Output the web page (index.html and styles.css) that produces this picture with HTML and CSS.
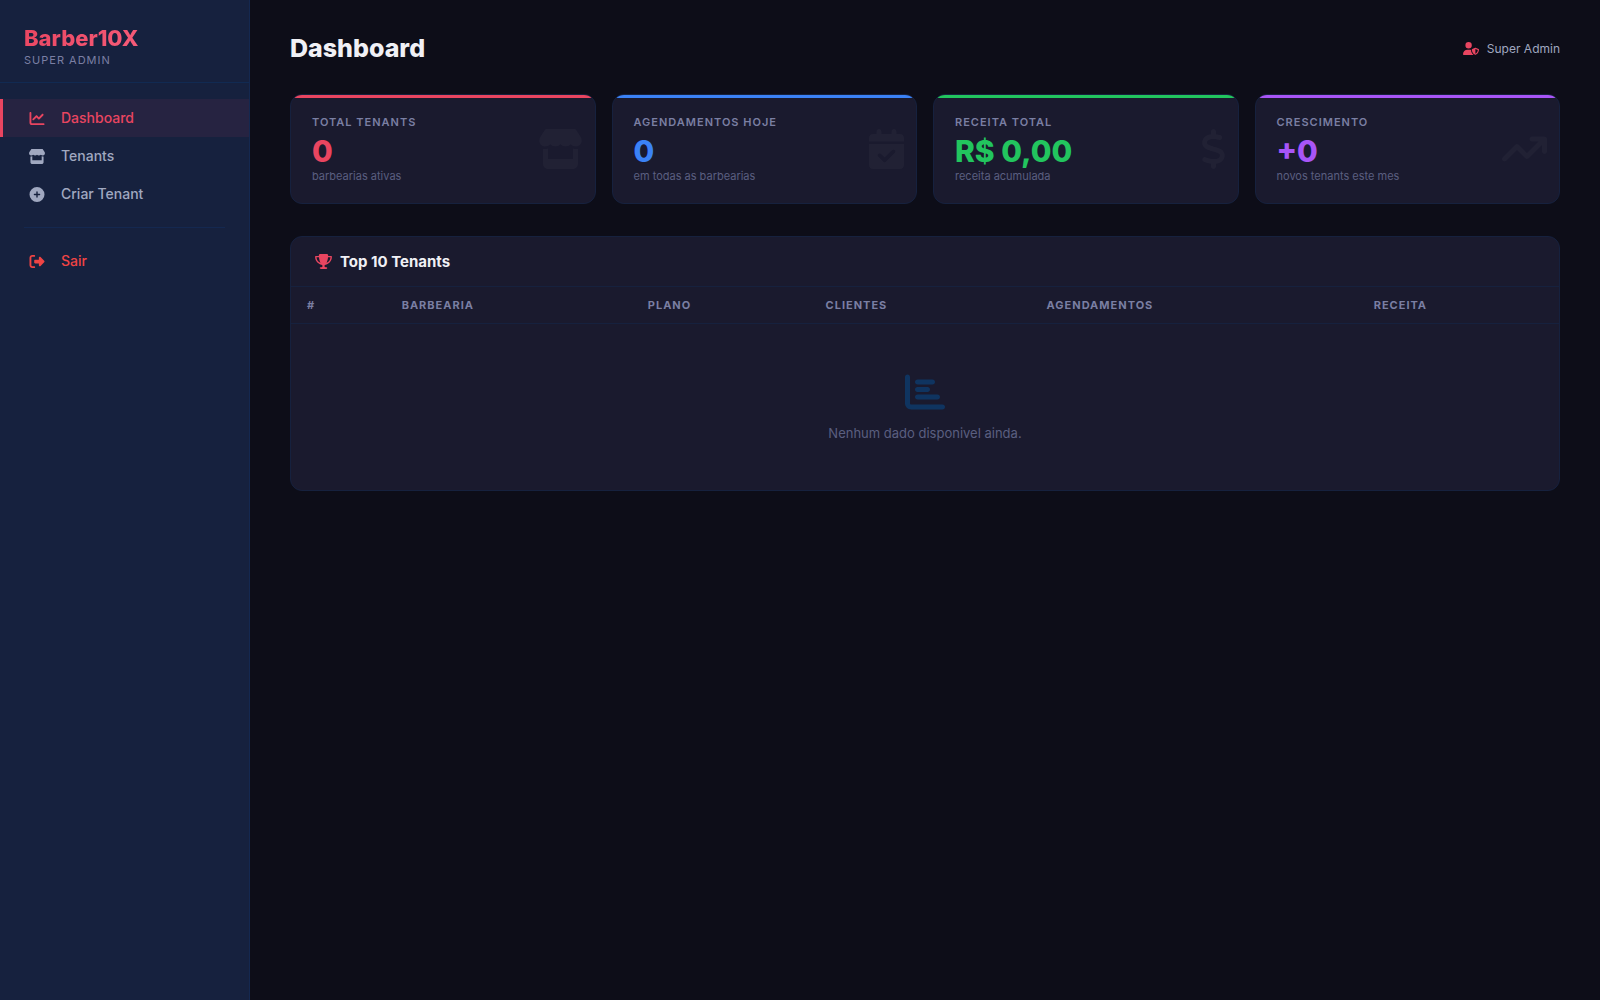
FILE: index.html
```html
<!DOCTYPE html>
<html lang="pt-BR">
<head>
  <meta charset="UTF-8">
  <meta name="viewport" content="width=device-width, initial-scale=1.0">
  <title>Dashboard - Barber10X</title>
  <link rel="stylesheet" href="styles.css">
</head>
<body>
  <aside class="sidebar">
    <div class="sidebar-header">
      <div class="logo">Barber10X</div>
      <div class="logo-sub">Super Admin</div>
    </div>
    <nav class="sidebar-nav">
      <a href="#" class="nav-link active">
        <svg viewBox="0 0 512 512" aria-hidden="true"><path d="M64 64c0-17.7-14.3-32-32-32S0 46.3 0 64V400c0 44.2 35.8 80 80 80H480c17.7 0 32-14.3 32-32s-14.3-32-32-32H80c-8.8 0-16-7.2-16-16V64zm406.6 86.6c12.5-12.5 12.5-32.8 0-45.3s-32.8-12.5-45.3 0L320 210.7l-57.4-57.4c-12.5-12.5-32.8-12.5-45.3 0l-112 112c-12.5 12.5-12.5 32.8 0 45.3s32.8 12.5 45.3 0L240 221.3l57.4 57.4c12.5 12.5 32.8 12.5 45.3 0l128-128z"/></svg>
        Dashboard
      </a>
      <a href="#" class="nav-link">
        <svg viewBox="0 0 576 512" aria-hidden="true"><path d="M547.6 103.8L490.3 13.1C485.2 5 476.1 0 466.4 0H109.6C99.9 0 90.8 5 85.7 13.1L28.3 103.8c-29.6 46.8-3.4 111.9 51.9 119.4c4 .5 8.1 .8 12.1 .8c26.1 0 49.3-11.4 65.2-29c15.9 17.6 39.1 29 65.2 29c26.1 0 49.3-11.4 65.2-29c15.9 17.6 39.1 29 65.2 29c26.2 0 49.3-11.4 65.2-29c16 17.6 39.1 29 65.2 29c4.1 0 8.1-.3 12.1-.8c55.5-7.4 81.8-72.5 52.1-119.4zM499.7 254.9l-.1 0c-5.3 .7-10.7 1.1-16.2 1.1c-12.4 0-24.3-1.9-35.4-5.3V384H128V250.6c-11.2 3.5-23.2 5.4-35.6 5.4c-5.5 0-11-.4-16.3-1.1l-.1 0c-4.1-.6-8.1-1.3-12-2.3V384v64c0 35.3 28.7 64 64 64H448c35.3 0 64-28.7 64-64V384 252.6c-4 1-8 1.8-12.3 2.3z"/></svg>
        Tenants
      </a>
      <a href="#" class="nav-link">
        <svg viewBox="0 0 512 512" aria-hidden="true"><path d="M256 512A256 256 0 1 0 256 0a256 256 0 1 0 0 512zM232 344V280H168c-13.3 0-24-10.7-24-24s10.7-24 24-24h64V168c0-13.3 10.7-24 24-24s24 10.7 24 24v64h64c13.3 0 24 10.7 24 24s-10.7 24-24 24H280v64c0 13.3-10.7 24-24 24s-24-10.7-24-24z"/></svg>
        Criar Tenant
      </a>
      <div class="nav-divider"></div>
      <a href="#" class="nav-link logout">
        <svg viewBox="0 0 512 512" aria-hidden="true"><path d="M377.9 105.9L500.7 228.7c7.2 7.2 11.3 17.1 11.3 27.3s-4.1 20.1-11.3 27.3L377.9 406.1c-6.4 6.4-15 9.9-24 9.9c-18.7 0-33.9-15.2-33.9-33.9l0-62.1-128 0c-17.7 0-32-14.3-32-32l0-64c0-17.7 14.3-32 32-32l128 0 0-62.1c0-18.7 15.2-33.9 33.9-33.9c9 0 17.6 3.6 24 9.9zM160 96L96 96c-17.7 0-32 14.3-32 32l0 256c0 17.7 14.3 32 32 32l64 0c17.7 0 32 14.3 32 32s-14.3 32-32 32l-64 0c-53 0-96-43-96-96L0 128C0 75 43 32 96 32l64 0c17.7 0 32 14.3 32 32s-14.3 32-32 32z"/></svg>
        Sair
      </a>
    </nav>
  </aside>

  <main class="main">
    <header class="page-header">
      <h1>Dashboard</h1>
      <div class="user">
        <svg viewBox="0 0 640 512" aria-hidden="true"><path d="M224 256A128 128 0 1 0 224 0a128 128 0 1 0 0 256zm-45.7 48C79.8 304 0 383.8 0 482.3C0 498.7 13.3 512 29.7 512H418.3c1.8 0 3.5-.2 5.3-.5c-76.3-55.1-99.8-141-103.1-200.2c-16.1-4.8-33.1-7.3-50.7-7.3H178.3zm308.8-78.3l-120 48C358 277.4 352 286.2 352 296c0 63.3 25.9 168.8 134.8 214.2c5.9 2.5 12.6 2.5 18.5 0C614.1 464.8 640 359.3 640 296c0-9.8-6-18.6-15.1-22.3l-120-48c-5.7-2.3-12.1-2.3-17.8 0zM591.4 312c-3.9 50.7-27.2 116.7-95.4 149.7V273.8L591.4 312z"/></svg>
        <span>Super Admin</span>
      </div>
    </header>

    <section class="stats">
      <div class="stat-card red">
        <div class="stat-label">Total Tenants</div>
        <div class="stat-value">0</div>
        <div class="stat-sub">barbearias ativas</div>
        <svg class="stat-icon" viewBox="0 0 576 512" aria-hidden="true"><path d="M547.6 103.8L490.3 13.1C485.2 5 476.1 0 466.4 0H109.6C99.9 0 90.8 5 85.7 13.1L28.3 103.8c-29.6 46.8-3.4 111.9 51.9 119.4c4 .5 8.1 .8 12.1 .8c26.1 0 49.3-11.4 65.2-29c15.9 17.6 39.1 29 65.2 29c26.1 0 49.3-11.4 65.2-29c15.9 17.6 39.1 29 65.2 29c26.2 0 49.3-11.4 65.2-29c16 17.6 39.1 29 65.2 29c4.1 0 8.1-.3 12.1-.8c55.5-7.4 81.8-72.5 52.1-119.4zM499.7 254.9l-.1 0c-5.3 .7-10.7 1.1-16.2 1.1c-12.4 0-24.3-1.9-35.4-5.3V384H128V250.6c-11.2 3.5-23.2 5.4-35.6 5.4c-5.5 0-11-.4-16.3-1.1l-.1 0c-4.1-.6-8.1-1.3-12-2.3V384v64c0 35.3 28.7 64 64 64H448c35.3 0 64-28.7 64-64V384 252.6c-4 1-8 1.8-12.3 2.3z"/></svg>
      </div>
      <div class="stat-card blue">
        <div class="stat-label">Agendamentos Hoje</div>
        <div class="stat-value">0</div>
        <div class="stat-sub">em todas as barbearias</div>
        <svg class="stat-icon" viewBox="0 0 448 512" aria-hidden="true"><path d="M128 0c17.7 0 32 14.3 32 32V64H288V32c0-17.7 14.3-32 32-32s32 14.3 32 32V64h48c26.5 0 48 21.5 48 48v48H0V112C0 85.5 21.5 64 48 64H96V32c0-17.7 14.3-32 32-32zM0 192H448V464c0 26.5-21.5 48-48 48H48c-26.5 0-48-21.5-48-48V192zM329 305c9.4-9.4 9.4-24.6 0-33.9s-24.6-9.4-33.9 0l-95 95-47-47c-9.4-9.4-24.6-9.4-33.9 0s-9.4 24.6 0 33.9l64 64c9.4 9.4 24.6 9.4 33.9 0L329 305z"/></svg>
      </div>
      <div class="stat-card green">
        <div class="stat-label">Receita Total</div>
        <div class="stat-value">R$ 0,00</div>
        <div class="stat-sub">receita acumulada</div>
        <svg class="stat-icon" viewBox="0 0 320 512" aria-hidden="true"><path d="M160 0c17.7 0 32 14.3 32 32V67.7c1.6 .2 3.1 .4 4.7 .7c.4 .1 .7 .1 1.1 .2l48 8.8c17.4 3.2 28.9 19.9 25.7 37.2s-19.9 28.9-37.2 25.7l-47.5-8.7c-31.3-4.6-58.9-1.5-78.3 6.2s-27.2 18.3-29 28.1c-2 10.7-.5 16.7 1.2 20.4c1.8 3.9 5.5 8.3 12.8 13.2c16.3 10.7 41.3 17.7 73.7 26.3l2.9 .8c28.6 7.6 63.6 16.8 89.6 33.8c14.2 9.3 27.6 21.9 35.9 39.5c8.5 17.9 10.3 37.9 6.4 59.2c-6.9 38-33.1 63.4-65.6 76.7c-13.7 5.6-28.6 9.2-44.4 11V480c0 17.7-14.3 32-32 32s-32-14.3-32-32V445.1c-.4-.1-.9-.1-1.3-.2l-.2 0 0 0c-24.4-3.8-64.5-14.3-91.5-26.3c-16.1-7.2-23.4-26.1-16.2-42.2s26.1-23.4 42.2-16.2c20.9 9.3 55.3 18.5 75.2 21.6c31.9 4.7 58.2 2 76-5.3c16.9-6.9 24.6-16.9 26.8-28.9c1.9-10.6 .4-16.7-1.3-20.4c-1.9-4-5.6-8.4-13-13.3c-16.4-10.7-41.5-17.7-74-26.3l-2.8-.7 0 0C119.4 279.3 84.4 270 58.4 253c-14.2-9.3-27.5-22-35.8-39.6c-8.4-17.9-10.1-37.9-6.1-59.2C23.7 116 52.3 91.2 84.8 78.3c13.3-5.3 27.9-8.9 43.2-11V32c0-17.7 14.3-32 32-32z"/></svg>
      </div>
      <div class="stat-card purple">
        <div class="stat-label">Crescimento</div>
        <div class="stat-value">+0</div>
        <div class="stat-sub">novos tenants este mes</div>
        <svg class="stat-icon" viewBox="0 0 576 512" aria-hidden="true"><path d="M384 160c-17.7 0-32-14.3-32-32s14.3-32 32-32H544c17.7 0 32 14.3 32 32V288c0 17.7-14.3 32-32 32s-32-14.3-32-32V205.3L342.6 374.6c-12.5 12.5-32.8 12.5-45.3 0L192 269.3 54.6 406.6c-12.5 12.5-32.8 12.5-45.3 0s-12.5-32.8 0-45.3l160-160c12.5-12.5 32.8-12.5 45.3 0L320 306.7 466.7 160H384z"/></svg>
      </div>
    </section>

    <section class="panel">
      <div class="panel-header">
        <svg viewBox="0 0 576 512" aria-hidden="true"><path d="M400 0H176c-26.5 0-48.1 21.8-47.1 48.2c.2 5.3 .4 10.6 .7 15.8H24C10.7 64 0 74.7 0 88c0 92.6 33.5 157 78.5 200.7c44.3 43.1 98.3 64.8 138.1 75.8c23.4 6.5 39.4 26 39.4 45.6c0 20.9-17 37.9-37.9 37.9H192c-17.7 0-32 14.3-32 32s14.3 32 32 32H384c17.7 0 32-14.3 32-32s-14.3-32-32-32H357.9C337 448 320 431 320 410.1c0-19.6 15.9-39.2 39.4-45.6c39.9-11 93.9-32.7 138.2-75.8C542.5 245 576 180.6 576 88c0-13.3-10.7-24-24-24H446.4c.3-5.2 .5-10.4 .7-15.8C448.1 21.8 426.5 0 400 0zM48.9 112h84.4c9.1 90.1 29.2 150.3 51.9 190.6c-24.9-11-50.8-26.5-73.2-48.3c-32-31.1-58-76-63-142.3zM464.1 254.3c-22.4 21.8-48.3 37.3-73.2 48.3c22.7-40.3 42.8-100.5 51.9-190.6h84.4c-5.1 66.3-31.1 111.2-63 142.3z"/></svg>
        <h2>Top 10 Tenants</h2>
      </div>
      <table>
        <thead>
          <tr>
            <th>#</th>
            <th>Barbearia</th>
            <th>Plano</th>
            <th>Clientes</th>
            <th>Agendamentos</th>
            <th>Receita</th>
          </tr>
        </thead>
        <tbody>
          <tr>
            <td colspan="6" class="empty">
              <svg viewBox="0 0 512 512" aria-hidden="true"><path d="M32 32c17.7 0 32 14.3 32 32V400c0 8.8 7.2 16 16 16H480c17.7 0 32 14.3 32 32s-14.3 32-32 32H80c-44.2 0-80-35.8-80-80V64C0 46.3 14.3 32 32 32zm96 96c0-17.7 14.3-32 32-32l192 0c17.7 0 32 14.3 32 32s-14.3 32-32 32l-192 0c-17.7 0-32-14.3-32-32zm32 64H288c17.7 0 32 14.3 32 32s-14.3 32-32 32H160c-17.7 0-32-14.3-32-32s14.3-32 32-32zm0 96H416c17.7 0 32 14.3 32 32s-14.3 32-32 32H160c-17.7 0-32-14.3-32-32s14.3-32 32-32z"/></svg>
              <p>Nenhum dado disponivel ainda.</p>
            </td>
          </tr>
        </tbody>
      </table>
    </section>
  </main>
</body>
</html>
```
FILE: styles.css
```css
* {
  margin: 0;
  padding: 0;
  box-sizing: border-box;
}

body {
  font-family: 'Inter', sans-serif;
  background: #0d0d18;
  color: #f0f0f5;
  min-height: 100vh;
  display: flex;
}

svg {
  fill: currentColor;
  flex-shrink: 0;
}

/* Sidebar */
.sidebar {
  width: 250px;
  flex-shrink: 0;
  background: #16213e;
  border-right: 1px solid #142850;
}

.sidebar-header {
  padding: 24px 24px 14px;
  border-bottom: 1px solid #112a52;
}

.logo {
  font-size: 22px;
  line-height: 28px;
  font-weight: 800;
  background: linear-gradient(135deg, #e94560, #ff6b8a);
  -webkit-background-clip: text;
  background-clip: text;
  color: transparent;
}

.logo-sub {
  font-size: 11px;
  line-height: 16px;
  letter-spacing: 1px;
  text-transform: uppercase;
  color: #7a7fa3;
}

.sidebar-nav {
  padding: 16px 0;
}

.nav-link {
  display: flex;
  align-items: center;
  gap: 14px;
  padding: 11px 24px;
  border-left: 3px solid transparent;
  color: #a0a8c0;
  font-size: 14px;
  line-height: 16px;
  font-weight: 500;
  text-decoration: none;
}

.nav-link svg {
  width: 20px;
  height: 15px;
}

.nav-link:hover,
.nav-link.active {
  background: rgba(233, 69, 96, 0.08);
  border-left-color: #e94560;
  color: #e94560;
}

.nav-link.logout {
  color: #ef4444;
}

.nav-divider {
  height: 1px;
  margin: 14px 24px;
  background: #142850;
}

/* Content */
.main {
  flex: 1;
  min-width: 0;
  padding: 32px 40px;
}

.page-header {
  display: flex;
  justify-content: space-between;
  align-items: center;
  margin-bottom: 30px;
}

.page-header h1 {
  font-size: 25px;
  line-height: 32px;
  font-weight: 800;
}

.user {
  display: flex;
  align-items: center;
  gap: 8px;
  color: #a0a8c0;
  font-size: 12px;
}

.user svg {
  width: 16px;
  height: 13px;
  color: #e94560;
}

.stats {
  display: grid;
  grid-template-columns: repeat(4, 1fr);
  gap: 16px;
  margin-bottom: 32px;
}

.stat-card {
  position: relative;
  overflow: hidden;
  background: #1a1a2e;
  border: 1px solid #16213e;
  border-radius: 12px;
  padding: 20px 21px;
}

.stat-card::before {
  content: '';
  position: absolute;
  top: 0;
  left: 0;
  right: 0;
  height: 3px;
  background: currentColor;
}

.stat-card.red { color: #e94560; }
.stat-card.blue { color: #3b82f6; }
.stat-card.green { color: #22c55e; }
.stat-card.purple { color: #a855f7; }

.stat-label {
  font-size: 11px;
  line-height: 14px;
  font-weight: 600;
  letter-spacing: 1px;
  text-transform: uppercase;
  color: #7a7fa3;
}

.stat-value {
  font-size: 30px;
  line-height: 36px;
  margin-top: 4px;
  font-weight: 800;
}

.stat-sub {
  font-size: 11px;
  line-height: 14px;
  color: #5a5f80;
}

.stat-icon {
  position: absolute;
  top: 50%;
  right: 12px;
  height: 40px;
  transform: translateY(-50%);
  color: rgba(255, 255, 255, 0.03);
}

/* Table */
.panel {
  background: #1a1a2e;
  border: 1px solid #16213e;
  border-radius: 12px;
  overflow: hidden;
}

.panel-header {
  display: flex;
  align-items: center;
  gap: 8px;
  padding: 16px 24px;
  border-bottom: 1px solid #16213e;
}

.panel-header svg {
  width: 17px;
  height: 15px;
  color: #e94560;
}

.panel-header h2 {
  font-size: 15px;
  line-height: 17px;
  font-weight: 700;
}

table {
  width: 100%;
  border-collapse: collapse;
}

th {
  padding: 12px 16px;
  border-bottom: 1px solid #16213e;
  color: #7a7fa3;
  font-size: 11px;
  line-height: 12px;
  font-weight: 700;
  letter-spacing: 1px;
  text-align: left;
  text-transform: uppercase;
}

.empty {
  padding: 48px 24px;
  color: #5a5f80;
  font-size: 13px;
  line-height: 18px;
  text-align: center;
}

.empty svg {
  display: block;
  width: 40px;
  height: 40px;
  margin: 0 auto 12px;
  color: #0f3460;
}
```
